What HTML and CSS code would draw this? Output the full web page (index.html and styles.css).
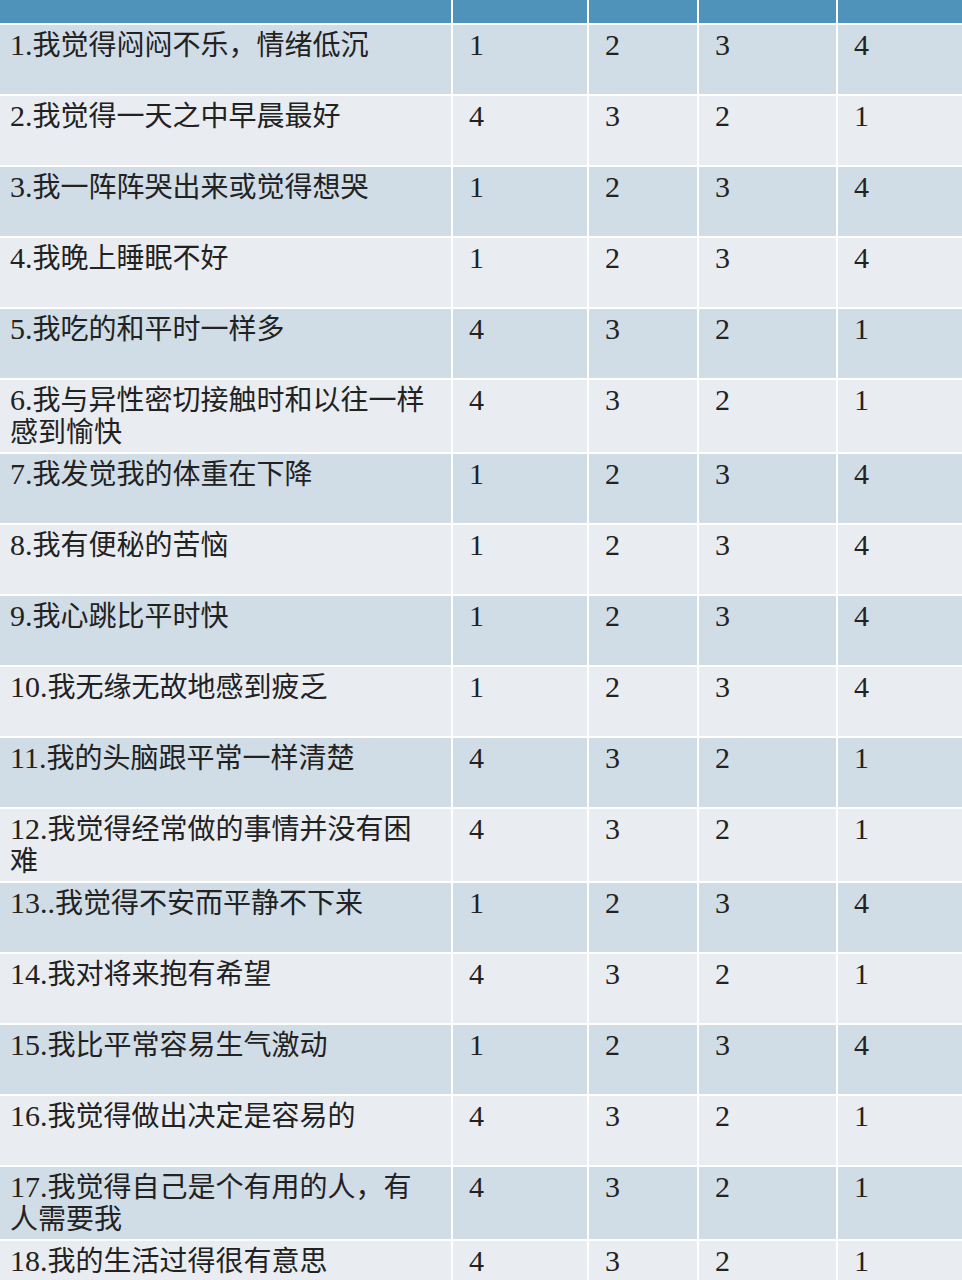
FILE: index.html
```html
<!DOCTYPE html>
<html lang="zh-CN">
<head>
<meta charset="utf-8">
<title>抑郁自评量表</title>
<link rel="stylesheet" href="styles.css">
</head>
<body>
<div class="sheet">
  <div class="row head"><div class="cell"></div><div class="cell"></div><div class="cell"></div><div class="cell"></div><div class="cell"></div></div>

  <div class="row odd"><div class="cell q"><span class="no">1.</span>我觉得闷闷不乐，情绪低沉</div><div class="cell n">1</div><div class="cell n">2</div><div class="cell n">3</div><div class="cell n">4</div></div>
  <div class="row even"><div class="cell q"><span class="no">2.</span>我觉得一天之中早晨最好</div><div class="cell n">4</div><div class="cell n">3</div><div class="cell n">2</div><div class="cell n">1</div></div>
  <div class="row odd"><div class="cell q"><span class="no">3.</span>我一阵阵哭出来或觉得想哭</div><div class="cell n">1</div><div class="cell n">2</div><div class="cell n">3</div><div class="cell n">4</div></div>
  <div class="row even"><div class="cell q"><span class="no">4.</span>我晚上睡眠不好</div><div class="cell n">1</div><div class="cell n">2</div><div class="cell n">3</div><div class="cell n">4</div></div>
  <div class="row odd"><div class="cell q"><span class="no">5.</span>我吃的和平时一样多</div><div class="cell n">4</div><div class="cell n">3</div><div class="cell n">2</div><div class="cell n">1</div></div>
  <div class="row even"><div class="cell q"><span class="no">6.</span>我与异性密切接触时和以往一样感到愉快</div><div class="cell n">4</div><div class="cell n">3</div><div class="cell n">2</div><div class="cell n">1</div></div>
  <div class="row odd"><div class="cell q"><span class="no">7.</span>我发觉我的体重在下降</div><div class="cell n">1</div><div class="cell n">2</div><div class="cell n">3</div><div class="cell n">4</div></div>
  <div class="row even"><div class="cell q"><span class="no">8.</span>我有便秘的苦恼</div><div class="cell n">1</div><div class="cell n">2</div><div class="cell n">3</div><div class="cell n">4</div></div>
  <div class="row odd"><div class="cell q"><span class="no">9.</span>我心跳比平时快</div><div class="cell n">1</div><div class="cell n">2</div><div class="cell n">3</div><div class="cell n">4</div></div>
  <div class="row even"><div class="cell q"><span class="no">10.</span>我无缘无故地感到疲乏</div><div class="cell n">1</div><div class="cell n">2</div><div class="cell n">3</div><div class="cell n">4</div></div>
  <div class="row odd"><div class="cell q"><span class="no">11.</span>我的头脑跟平常一样清楚</div><div class="cell n">4</div><div class="cell n">3</div><div class="cell n">2</div><div class="cell n">1</div></div>
  <div class="row even"><div class="cell q"><span class="no">12.</span>我觉得经常做的事情并没有困难</div><div class="cell n">4</div><div class="cell n">3</div><div class="cell n">2</div><div class="cell n">1</div></div>
  <div class="row odd"><div class="cell q"><span class="no">13..</span>我觉得不安而平静不下来</div><div class="cell n">1</div><div class="cell n">2</div><div class="cell n">3</div><div class="cell n">4</div></div>
  <div class="row even"><div class="cell q"><span class="no">14.</span>我对将来抱有希望</div><div class="cell n">4</div><div class="cell n">3</div><div class="cell n">2</div><div class="cell n">1</div></div>
  <div class="row odd"><div class="cell q"><span class="no">15.</span>我比平常容易生气激动</div><div class="cell n">1</div><div class="cell n">2</div><div class="cell n">3</div><div class="cell n">4</div></div>
  <div class="row even"><div class="cell q"><span class="no">16.</span>我觉得做出决定是容易的</div><div class="cell n">4</div><div class="cell n">3</div><div class="cell n">2</div><div class="cell n">1</div></div>
  <div class="row odd"><div class="cell q"><span class="no">17.</span>我觉得自己是个有用的人，有人需要我</div><div class="cell n">4</div><div class="cell n">3</div><div class="cell n">2</div><div class="cell n">1</div></div>
  <div class="row even"><div class="cell q"><span class="no">18.</span>我的生活过得很有意思</div><div class="cell n">4</div><div class="cell n">3</div><div class="cell n">2</div><div class="cell n">1</div></div>
</div>
</body>
</html>
```
FILE: styles.css
```css
html, body {
  margin: 0;
  padding: 0;
  overflow: hidden;
  background: #ffffff;
}

.sheet {
  display: grid;
  grid-template-columns: 451px 134px 108px 137px 1fr;
  gap: 2px;
  width: 962px;
  background: #ffffff;
  font-family: "Liberation Serif", "Noto Sans CJK SC", serif;
  font-size: 28px;
  line-height: 32px;
  color: #222222;
}

.row {
  display: contents;
}

.cell {
  box-sizing: border-box;
  min-height: 69px;
  padding: 4px 16px 3px 16px;
}

.head .cell {
  min-height: 0;
  height: 23px;
  padding: 0;
  background: #4f93ba;
}

.odd .cell {
  background: #d0dce6;
}

.even .cell {
  background: #e9edf1;
}

.q {
  padding-left: 10px;
  padding-right: 21px;
}

.no,
.n {
  font-size: 30px;
}
```
